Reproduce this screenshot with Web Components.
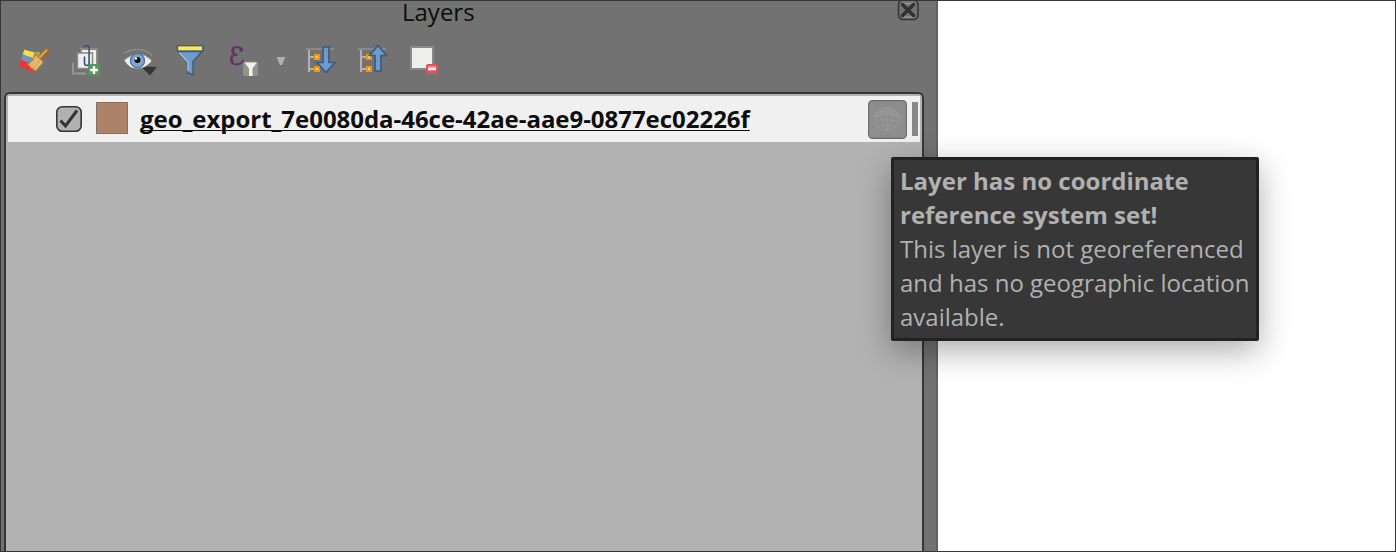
<!DOCTYPE html>
<html lang="en">
<head>
<meta charset="utf-8">
<title>Layers</title>
<style>
html,body{margin:0;height:100%;overflow:hidden;background:#fff}
body{font-family:"Open Sans","Noto Sans",sans-serif;color:#0d0d0d}
</style>
</head>
<body>
<app-window>
  <layers-panel heading="Layers">
    <tool-bar slot="tools"></tool-bar>
    <layer-row>geo_export_7e0080da-46ce-42ae-aae9-0877ec02226f</layer-row>
  </layers-panel>
  <tool-tip slot="overlay"><span slot="title">Layer has no coordinate<br>reference system set!</span>This layer is not georeferenced<br>and has no geographic location<br>available.</tool-tip>
</app-window>
<script>
const define = (name, html) => customElements.define(name, class extends HTMLElement {
  constructor() {
    super();
    this.attachShadow({mode: 'open'}).innerHTML = html;
    const h = this.shadowRoot.querySelector('[data-heading]');
    if (h) h.textContent = this.getAttribute('heading');
  }
});

define('tool-tip', `<style>
:host{position:absolute;left:890px;top:156px;box-sizing:border-box;width:368px;height:184px;border:3px solid #222;border-radius:2px;background:#373737;color:#b1b1b1;padding:4px 0 0 6px;font-size:24px;line-height:34px;white-space:nowrap;box-shadow:0 10px 32px rgba(0,0,0,.32)}
.t{font-weight:700}
</style><div class="t"><slot name="title"></slot></div><div><slot></slot></div>`);

define('app-window', `<style>
:host{display:flex;position:relative;box-sizing:border-box;width:1396px;height:552px;border:1px solid #363636;background:#fff;overflow:hidden}
</style><slot></slot><slot name="overlay"></slot>`);

define('layers-panel', `<style>
:host{display:flex;flex-direction:column;box-sizing:border-box;width:937px;height:550px;background:#727272;border-right:2px solid #626262}
header{display:grid;grid-template-columns:401px auto 1fr;height:43px}
h1{grid-column:2;margin:0;font-size:24px;font-weight:400;line-height:22px;height:22px}
.close{justify-self:end;margin-right:16px;height:22px}
svg{display:block}
.list{flex:1;margin:15px 12px 0 3px;border:2px solid #363636;border-bottom:0;border-radius:6px 6px 0 0;background:#b2b2b2;padding:2px 2px 0;min-height:0}
</style>
<header><h1 data-heading></h1><div class="close"><svg width="24" height="22" viewBox="896 1 24 22"><rect x="898.5" y="0" width="19.5" height="19.5" rx="4.5" fill="#727272" stroke="#363636" stroke-width="1.6"/><path d="M901 3.5h14M903 17h11" stroke="#929292" stroke-width="1.5"/><path d="M902.5 4.5 913.5 15.5M913.5 4.5 902.5 15.5" stroke="#303030" stroke-width="3.4" stroke-linecap="round"/></svg></div></header>
<slot name="tools"></slot><div class="list"><slot></slot></div>`);

define('layer-row', `<style>
:host{display:flex;align-items:center;height:46px;background:#f0f0f0}
svg{display:block;flex:none}
.check{margin-left:48px}
.swatch{box-sizing:border-box;width:32px;height:32px;margin:-2px 0 0 14px;background:#ae8269;border:1px solid #87705f}
.name{margin-left:12px;font-size:24px;line-height:34px;font-weight:700;letter-spacing:-.035px;text-decoration:underline;text-decoration-thickness:1px;text-underline-offset:2px;text-decoration-skip-ink:none;white-space:nowrap}
.crs{margin-left:auto}
.bar{width:6px;height:34px;background:#888;margin:-1px 2px 0 5px}
</style>
<svg class="check" width="26" height="26" viewBox="56 106 26 26"><rect x="56.8" y="106.8" width="24.4" height="24.4" rx="5.5" fill="#b1b1b1" stroke="#363636" stroke-width="1.6"/><path d="M60.5 120.5l5 5.5 11.5-15.5" fill="none" stroke="#333" stroke-width="3"/></svg>
<div class="swatch"></div><div class="name"><slot></slot></div>
<svg class="crs" width="39" height="39" viewBox="868 100 39 39"><rect x="868.6" y="100.6" width="37.8" height="37.8" rx="4" fill="#8d8d8d" stroke="#6d6d6d" stroke-width="1.2"/><g fill="none" stroke="#979797" stroke-width="1.1"><path d="M873 117l8-8q6-3 12 0l8 8-3 1-4-3h-14l-4 3z" fill="#959595"/><path d="M875 119a12 12 0 0 0 24 0M882 116q0 10 5 15 5-5 5-15M875 120h24M877 126h20M887 109v22M879 112h16"/></g></svg>
<div class="bar"></div>`);

define('tool-bar', `<style>
:host{display:flex;height:33px;padding-left:17px}
svg{display:block;flex:none}
</style>
<svg width="32" height="32" viewBox="18 44 32 32"><path d="M24.500 49.500q7 3 15.500 3l-3 8-14.500-6z" fill="#f3df55"/><path d="M34 52l6 .5-3 6-4-1z" fill="#a49b66"/><path d="M22.700 54q5 3 10 3.500l-3 8-9-5z" fill="#6d93bd"/><path d="M20.700 59.500l9 4 5 8h-3l-12.500-5.500z" fill="#ed3532"/><path d="M39.500 58l7.300-7.500" stroke="#a9691d" stroke-width="4" stroke-linecap="round"/><path d="M39.500 57.500l7-7.200" stroke="#eaa043" stroke-width="2" stroke-linecap="round"/><path d="M36 54.500l7.500 7.500q-1.500 3-3.500 4l-4 5q-4-1-8.500-7l5-3q1-4 3.500-6.500z" fill="#dca960" stroke="#b77727"/><path d="M33 59.500l7 6M31 61.500l7 6M34.500 57l7 6M38 59l-6.500 8.500M41 62l-6 8M36 57.500l-6 7.500" stroke="#efcd8d" stroke-width=".7"/></svg>
<svg style="margin-left:21px" width="32" height="32" viewBox="71 44 32 32"><path d="M73 63v10.500h13" fill="none" stroke="#989890" stroke-width="1.800"/><rect x="81" y="49" width="16" height="17" fill="#eee" stroke="#8a8b83" stroke-width="2"/><rect x="77.500" y="53" width="15" height="15.500" fill="#eee" stroke="#8a8b83" stroke-width="1.500"/><path d="M84.500 56.500v6.500q0 2.500 2.300 2.500t2.300-2.500V48.500q0-3-2.300-3t-2.600 2" fill="none" stroke="#39547b" stroke-width="1.600"/><rect x="88" y="64" width="12" height="12" rx="2.500" fill="#55965a"/><path d="M94 66v8M90 70h8" stroke="#fff" stroke-width="2.400"/></svg>
<svg style="margin-left:20px" width="36" height="32" viewBox="123 44 36 32"><path d="M124 53.500q7-4.500 14-4 9 .3 14 6" fill="none" stroke="#8b8c84" stroke-width="1.600"/><path d="M124.500 60.500q7-6.500 14-6.500t13 7q-6 7.500-14.500 7.500-8 0-12.500-8z" fill="#eee"/><path d="M124 60.500q8-6.500 14-6.500t13.500 6" fill="none" stroke="#aaa"/><circle cx="137.500" cy="60.700" r="7" fill="#7fa6d2" stroke="#47719f" stroke-width="1.300"/><circle cx="137.500" cy="60" r="3" fill="#080808"/><circle cx="136" cy="58.500" r="1.200" fill="#fff"/><path d="M142.500 68l4.500-1.500 10 .5-7 8.500z" fill="#363636"/></svg>
<svg style="margin-left:16px" width="30" height="32" viewBox="175 44 30 32"><path d="M178.500 51.500h23.500l-9 10v13.500l-5.500-2.500V61.500z" fill="#6e9bcc" stroke="#3b5b80" stroke-width="1.400"/><path d="M179.500 52.500l8.500 9.500v9" fill="none" stroke="#b9cde4" stroke-width="1.200"/><rect x="177.500" y="45.700" width="25.300" height="5.300" fill="#fbe84f" stroke="#3b5b80" stroke-width="1.300"/></svg>
<svg style="margin-left:23px" width="32" height="32" viewBox="228 44 32 32"><path d="M242 50q-1.500-3-5-3-4.500 0-4.500 3.700 0 4 5.500 4-7 0-7 5t6 4.600q4 0 6.500-4.300" fill="none" stroke="#633465" stroke-width="1.800"/><path d="M234 47.500q-2.500 3.500 0 6.500M232.500 55.500q-2.500 4 .5 7.500" fill="none" stroke="#633465" stroke-width="2.600"/><circle cx="241.300" cy="50" r="1.900" fill="#633465"/><rect x="243" y="61.500" width="15" height="15" rx="2.500" fill="#92938b"/><path d="M244.500 62.500h12.500l-4.500 6v7.500h-3.500v-7.500z" fill="#f1f1ef"/></svg>
<svg style="margin-left:16px" width="10" height="32" viewBox="276 44 10 32"><path d="M276.500 57h9l-3.500 8h-2z" fill="#b1b1b1"/></svg>
<svg style="margin-left:20px" width="30" height="32" viewBox="306 44 30 32"><path d="M306 49h28" stroke="#898a82" stroke-width="2"/><path d="M309 50v22M309 57h6M309 69h6" stroke="#b1b1b1" stroke-width="2"/><path d="M314 54h6v6h-6zM314 66h6v6h-6z" fill="#f59213"/><path d="M316 56h2v2h-2zM316 68h2v2h-2z" fill="#ffe45b"/><path d="M323 47h6v15.500h6l-9 10-9-10h6z" fill="#6e9bcc" stroke="#3b5b80" stroke-width="1.700"/></svg>
<svg style="margin-left:22px" width="30" height="32" viewBox="358 44 30 32"><path d="M358 49h28" stroke="#898a82" stroke-width="2"/><path d="M361 50v22M361 57h6M361 69h6" stroke="#b1b1b1" stroke-width="2"/><path d="M366 54h6v6h-6zM366 66h6v6h-6z" fill="#f59213"/><path d="M368 56h2v2h-2zM368 68h2v2h-2z" fill="#ffe45b"/><path d="M375 71v-15.500h-5.500l8.500-10 8.500 10h-5.500v15.500z" fill="#6e9bcc" stroke="#3b5b80" stroke-width="1.700"/></svg>
<svg style="margin-left:22px" width="30" height="32" viewBox="410 44 30 32"><rect x="411" y="47" width="22" height="22" fill="#eeeeec" stroke="#888a85" stroke-width="2"/><rect x="426" y="64" width="12" height="10" rx="2" fill="#ef4b50"/><rect x="428" y="66" width="8" height="2" fill="#f49390"/><rect x="428" y="68" width="8" height="2.300" fill="#fff"/></svg>`);
</script>
</body>
</html>
